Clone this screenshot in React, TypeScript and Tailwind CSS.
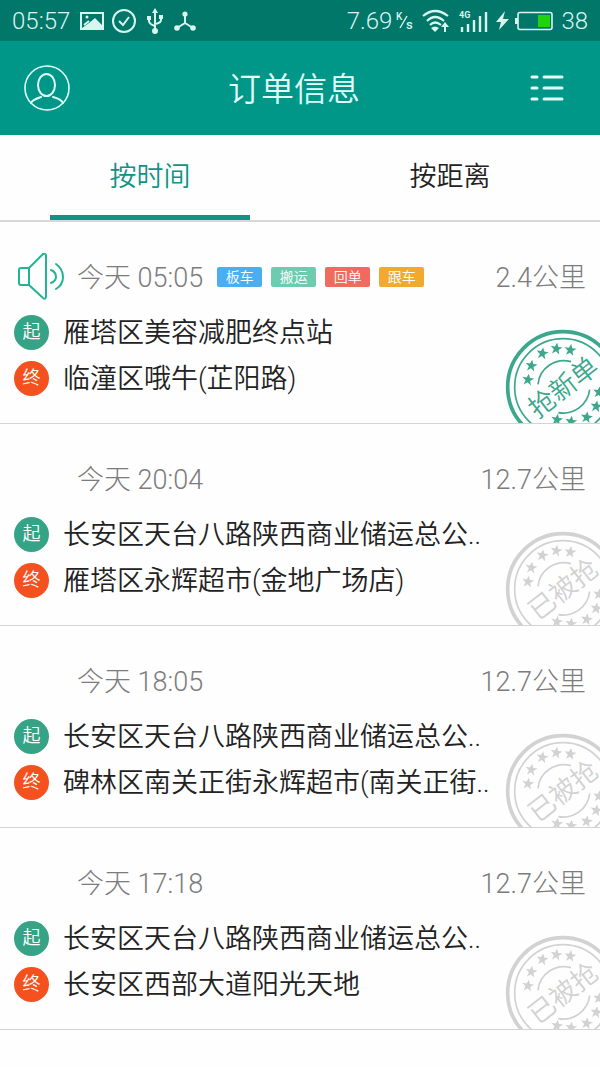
import React, { useState } from 'react';

type Tag = { label: string; color: string };

type Order = {
  id: number;
  time: string;
  distance: string;
  from: string;
  to: string;
  fresh?: boolean;
  tags?: Tag[];
};

const orders: Order[] = [
  {
    id: 1,
    time: '今天 05:05',
    distance: '2.4公里',
    from: '雁塔区美容减肥终点站',
    to: '临潼区哦牛(芷阳路)',
    fresh: true,
    tags: [
      { label: '板车', color: 'bg-[#4aaef0]' },
      { label: '搬运', color: 'bg-[#6fcbb0]' },
      { label: '回单', color: 'bg-[#f06a5e]' },
      { label: '跟车', color: 'bg-[#f2aa2e]' },
    ],
  },
  { id: 2, time: '今天 20:04', distance: '12.7公里', from: '长安区天台八路陕西商业储运总公..', to: '雁塔区永辉超市(金地广场店)' },
  { id: 3, time: '今天 18:05', distance: '12.7公里', from: '长安区天台八路陕西商业储运总公..', to: '碑林区南关正街永辉超市(南关正街..' },
  { id: 4, time: '今天 17:18', distance: '12.7公里', from: '长安区天台八路陕西商业储运总公..', to: '长安区西部大道阳光天地' },
];

// star centres on the stamp, measured from its middle
const stars = [
  [-105, -22], [-95, -64], [-62, -101], [-20, -115], [22, -111],
  [108, 16], [100, 58], [71, 91], [24, 104], [-18, 98],
];

function Stamp({ label, fresh }: { label: string; fresh?: boolean }) {
  return (
    <svg
      viewBox="-174 -174 348 348"
      className={`absolute top-[107px] -right-[21px] w-[116px] h-[116px] ${fresh ? 'text-[#3ba78c]' : 'text-[#d2d2d2]'}`}
      fill="none"
      stroke="currentColor"
    >
      <circle r="166" strokeWidth="11" />
      <circle r="145" strokeWidth="5" />
      <path d="M-75 -8A78 78 0 0 1 24 -76M80 8A80 80 0 0 1 -14 77" strokeWidth="5" />
      {stars.map(([x, y]) => (
        <path
          key={`${x},${y}`}
          transform={`translate(${x} ${y}) rotate(8)`}
          d="M0 -18L5 -6L18 -6L7 3L11 16L0 8L-11 16L-7 3L-18 -6L-5 -6Z"
          fill="currentColor"
          stroke="none"
        />
      ))}
      <text transform="rotate(-38)" y="29" textAnchor="middle" fontSize="80" fill="currentColor" stroke="none">
        {label}
      </text>
    </svg>
  );
}

function StatusBar() {
  return (
    <div className="h-[41px] px-3 flex items-center justify-between bg-[#007768] text-[#d9f5f0] text-2xl font-light">
      <div className="flex items-center">
        <span>05:57</span>
        <svg className="ml-2.5 w-6 h-[18px]" viewBox="0 0 24 18">
          <path d="M1 1H23V17H1Z" fill="none" stroke="currentColor" strokeWidth="2" />
          <path d="M2 16L9 11L15 6L22 13V17H2Z" fill="currentColor" />
          <circle cx="7" cy="5" r="1.5" fill="currentColor" />
          <path d="M4 13L9 9" stroke="currentColor" strokeWidth="2" />
        </svg>
        <svg className="ml-2 w-6 h-6" viewBox="0 0 24 24" fill="none" stroke="currentColor" strokeWidth="2">
          <circle cx="12" cy="12" r="11" />
          <path d="M7 12L11 16L17 8" />
        </svg>
        <svg className="ml-2.5 w-[18px] h-[26px]" viewBox="0 0 18 26" fill="none" stroke="currentColor" strokeWidth="2">
          <path d="M9 4V23M3 9V13Q3 16 9 18M15 9V12Q15 15 9 16" />
          <path d="M9 0L12 5H6ZM1 8H5V12H1ZM13 7H17V11H13Z" fill="currentColor" stroke="none" />
          <circle cx="9" cy="23" r="2" fill="currentColor" />
        </svg>
        <svg className="ml-2.5 w-[22px] h-5" viewBox="0 0 22 20" fill="none" stroke="currentColor" strokeWidth="2">
          <path d="M11 3V12L3 17M11 12L19 17" />
          <g fill="currentColor" stroke="none">
            <circle cx="11" cy="3" r="2.6" />
            <circle cx="3" cy="17" r="2.8" />
            <circle cx="19" cy="17" r="2.8" />
          </g>
        </svg>
      </div>
      <div className="flex items-center">
        <span>7.69</span>
        <svg className="ml-1 w-[18px] h-5" viewBox="0 0 18 20" fill="currentColor">
          <text x="0" y="9" fontSize="10" fontWeight="500">K</text>
          <text x="10" y="18" fontSize="13" fontWeight="500">s</text>
          <path d="M4 17L11 5" stroke="currentColor" strokeWidth="1.4" />
        </svg>
        <svg className="ml-2 w-[28px] h-6" viewBox="0 0 28 24" fill="none" stroke="currentColor" strokeWidth="2.2">
          <path d="M1 7Q13 -3 26 7M5 12Q13 4 22 12M8 16Q13 11 19 16" />
          <path d="M9 19Q13 16 17 19L13 23ZM23 13L27 18H24V23H22V18H19Z" fill="currentColor" stroke="none" />
        </svg>
        <svg className="ml-2 w-[30px] h-6" viewBox="0 0 30 24" fill="none" stroke="currentColor" strokeWidth="2.4">
          <path d="M4 18V23M10 15V23M16 11V23M22 7V23M28 3V23" />
          <text x="1" y="9" fontSize="9" fontWeight="700" fill="currentColor" stroke="none">4G</text>
        </svg>
        <svg className="ml-2 w-[13px] h-5" viewBox="0 0 13 20" fill="currentColor">
          <path d="M9 0L0 11H5L3 19L13 8H7Z" />
        </svg>
        <svg className="ml-1.5 w-[38px] h-5" viewBox="0 0 38 20">
          <rect x="3" y="1.5" width="34" height="17" rx="2" fill="none" stroke="currentColor" strokeWidth="1.6" />
          <path d="M0 7H3V13H0Z" fill="currentColor" />
          <path d="M23 4H35V16H23Z" fill="#1fd40f" />
        </svg>
        <span className="ml-2">38</span>
      </div>
    </div>
  );
}

function SpeakerIcon() {
  return (
    <svg className="w-[46px] h-12" viewBox="0 0 46 48" fill="none" stroke="#22b592" strokeWidth="2" strokeLinecap="round" strokeLinejoin="round">
      <path d="M3 15H11V32H3Q1 32 1 30V17Q1 15 3 15ZM11 15L25 1Q28 0 28 3V43Q28 47 25 45L11 32" />
      <path d="M33 17Q38 19 38 24Q38 28 33 30M38 11Q45 16 45 24Q45 32 38 36" />
    </svg>
  );
}

function Address({ badge, color, text }: { badge: string; color: string; text: string }) {
  return (
    <div className="h-[46px] flex items-center">
      <span className={`w-[35px] h-[35px] shrink-0 rounded-full flex items-center justify-center text-lg text-white ${color}`}>{badge}</span>
      <span className="ml-3.5 pt-0.5 text-[27px] text-[#222] whitespace-nowrap">{text}</span>
    </div>
  );
}

function OrderRow({ order }: { order: Order }) {
  return (
    <li className="relative overflow-hidden border-b border-[#d4d4d4] pt-8 pb-[22px] px-3.5">
      <div className="h-[46px] mb-[9px] flex items-center text-[#7c7c7c] text-[27px]">
        <div className="w-[63px] shrink-0 pl-1">{order.fresh && <SpeakerIcon />}</div>
        <span className="pt-0.5 font-light">{order.time}</span>
        <div className="ml-3.5 flex gap-[9px]">
          {order.tags?.map((tag) => (
            <span key={tag.label} className={`w-[45px] h-5 rounded-xs flex items-center justify-center text-sm text-white ${tag.color}`}>
              {tag.label}
            </span>
          ))}
        </div>
        <span className="ml-auto pt-0.5 font-light">{order.distance}</span>
      </div>
      <Address badge="起" color="bg-[#36a386]" text={order.from} />
      <Address badge="终" color="bg-[#f4511e]" text={order.to} />
      <Stamp label={order.fresh ? '抢新单' : '已被抢'} fresh={order.fresh} />
    </li>
  );
}

export default function App() {
  const [tab, setTab] = useState('time');
  const tabs = [
    { id: 'time', label: '按时间' },
    { id: 'distance', label: '按距离' },
  ];

  return (
    <div className="min-h-screen bg-[#fefefe] font-[350] font-[Roboto,'Noto_Sans_CJK_SC',sans-serif]">
      <StatusBar />
      <header className="h-[94px] pl-6 pr-9 flex items-center justify-between bg-[#009688] text-[#e0fffa]">
        <button type="button" aria-label="个人中心">
          <svg className="w-[46px] h-[46px]" viewBox="0 0 46 46" fill="none" stroke="currentColor" strokeWidth="1.6">
            <circle cx="23" cy="23" r="22" />
            <ellipse cx="22.5" cy="20" rx="8.5" ry="11" strokeWidth="2" />
            <path d="M7 38Q8 35 17 32M29 32Q37 34 39 38" strokeWidth="2" strokeLinecap="round" />
          </svg>
        </button>
        <h1 className="pt-1 text-[33px]">订单信息</h1>
        <button type="button" aria-label="列表" className="w-[46px] flex justify-end">
          <svg className="w-[34px] h-[26px]" viewBox="0 0 34 26" stroke="currentColor" strokeWidth="3" strokeLinecap="round">
            <path d="M2 2H7M14 2H32M2 13H7M14 13H32M2 24H7M14 24H32" />
          </svg>
        </button>
      </header>
      <nav className="flex border-b-2 border-[#d8d8d8]">
        {tabs.map((t) => (
          <button
            key={t.id}
            type="button"
            onClick={() => setTab(t.id)}
            className={`flex-1 h-[85px] flex flex-col items-center text-[27px] ${tab === t.id ? 'text-[#0f9384]' : 'text-[#222]'}`}
          >
            <span className="flex-1 pt-1 flex items-center">{t.label}</span>
            <span className={`w-2/3 h-[5px] ${tab === t.id ? 'bg-[#0f9384]' : ''}`} />
          </button>
        ))}
      </nav>
      <ul>
        {orders.map((order) => (
          <OrderRow key={order.id} order={order} />
        ))}
      </ul>
    </div>
  );
}
